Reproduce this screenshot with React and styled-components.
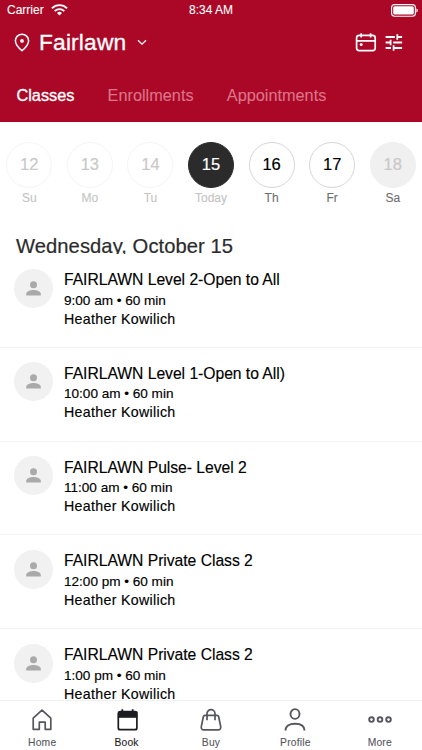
import styled, { createGlobalStyle } from "styled-components";

const DAYS = [
  { num: 12, label: "Su", state: "past" },
  { num: 13, label: "Mo", state: "past" },
  { num: 14, label: "Tu", state: "past" },
  { num: 15, label: "Today", state: "selected" },
  { num: 16, label: "Th", state: "open" },
  { num: 17, label: "Fr", state: "open" },
  { num: 18, label: "Sa", state: "closed" },
];

const CLASSES = [
  { id: 1, name: "FAIRLAWN Level 2-Open to All", time: "9:00 am • 60 min" },
  { id: 2, name: "FAIRLAWN Level 1-Open to All)", time: "10:00 am • 60 min" },
  { id: 3, name: "FAIRLAWN Pulse- Level 2", time: "11:00 am • 60 min" },
  { id: 4, name: "FAIRLAWN Private Class 2", time: "12:00 pm • 60 min" },
  { id: 5, name: "FAIRLAWN Private Class 2", time: "1:00 pm • 60 min" },
];

const CIRCLE = {
  past: { bg: "#fff", border: "#f5f5f5", color: "#c9c9c9", label: "#c4c4c4" },
  selected: { bg: "#2b2b2b", border: "#2b2b2b", color: "#fff", label: "#c4c4c4" },
  open: { bg: "#fff", border: "#d6d6d6", color: "#000", label: "#6e6e6e" },
  closed: { bg: "#f0f0f0", border: "#f0f0f0", color: "#c8c8c8", label: "#6e6e6e" },
};

const GlobalStyle = createGlobalStyle`
  * {
    box-sizing: border-box;
  }
  body {
    margin: 0;
    background: #fff;
    font-family: "Liberation Sans", Arial, sans-serif;
    overflow: hidden;
  }
  svg {
    display: block;
    flex: none;
  }
`;

const Screen = styled.div`
  display: flex;
  flex-direction: column;
  width: 422px;
  height: 750px;
  overflow: hidden;
`;

//header
const Header = styled.header`
  flex: none;
  height: 122px;
  background: #ab0726;
  color: #fff;
`;
const StatusBar = styled.div`
  display: grid;
  grid-template-columns: 1fr auto 1fr;
  align-items: center;
  height: 20px;
  padding: 0 3px 0 7px;
  font-size: 12px;
  line-height: 20px;
  -webkit-text-stroke: 0.1px;
`;
const Carrier = styled.div`
  display: flex;
  align-items: center;
  gap: 7px;
`;
const Clock = styled.div`
  padding-right: 4px;
`;
const Battery = styled.div`
  display: flex;
  justify-content: flex-end;
`;
const TitleBar = styled.div`
  display: flex;
  align-items: center;
  height: 44px;
  padding: 0 19px 0 14px;
`;
const Location = styled.h1`
  margin: 0 11px 0 9px;
  font-size: 22.8px;
  font-weight: 400;
  line-height: 44px;
  letter-spacing: 0.15px;
  -webkit-text-stroke: 0.3px;
`;
const Actions = styled.div`
  display: flex;
  align-items: center;
  gap: 8px;
  margin-left: auto;
`;
const Tabs = styled.nav`
  display: flex;
  gap: 33.2px;
  padding: 21px 16.5px 0;
`;
const Tab = styled.div`
  font-size: 16.3px;
  line-height: 20px;
  color: ${(p) => (p.$active ? "#fff" : "#dc7589")};
  -webkit-text-stroke: ${(p) => (p.$active ? "0.35px" : "0.1px")};
`;

//days
const Week = styled.div`
  display: flex;
  flex: none;
  justify-content: center;
  height: 108px;
  padding-top: 19.5px;
`;
const Day = styled.div`
  display: flex;
  flex: none;
  flex-direction: column;
  align-items: center;
  width: 60.6px;
`;
const Circle = styled.div`
  display: flex;
  justify-content: center;
  align-items: center;
  width: 46px;
  height: 46px;
  border: 1px solid ${(p) => CIRCLE[p.$state].border};
  border-radius: 50%;
  background: ${(p) => CIRCLE[p.$state].bg};
  color: ${(p) => CIRCLE[p.$state].color};
  font-size: 16.5px;
  -webkit-text-stroke: 0.2px;
`;
const DayLabel = styled.div`
  margin-top: 2px;
  font-size: 12px;
  line-height: 16px;
  color: ${(p) => CIRCLE[p.$state].label};
  -webkit-text-stroke: 0.1px;
`;
const DateTitle = styled.h2`
  flex: none;
  height: 24px;
  margin: 0;
  padding-left: 16px;
  overflow: hidden;
  font-size: 20.2px;
  font-weight: 400;
  line-height: 32px;
  letter-spacing: 0.06px;
  color: #2b2b2b;
  -webkit-text-stroke: 0.2px;
`;

//list
const List = styled.div`
  flex: 1;
  min-height: 0;
  overflow: hidden;
`;
const Item = styled.div`
  display: flex;
  height: 93.75px;
  padding: 14.5px 14px 0 13.5px;
  border-bottom: 1px solid #f3f3f3;
`;
const Avatar = styled.div`
  display: flex;
  flex: none;
  justify-content: center;
  align-items: center;
  width: 39px;
  height: 39px;
  margin-right: 11.5px;
  border-radius: 50%;
  background: #f1f1f1;
`;
const Info = styled.div`
  padding-top: 1.5px;
  color: #000;
  -webkit-text-stroke: 0.15px;
`;
const Name = styled.div`
  font-size: 15.7px;
  line-height: 20.5px;
  letter-spacing: -0.03px;
`;
const Time = styled.div`
  font-size: 13.6px;
  line-height: 19px;
  letter-spacing: -0.02px;
`;
const Teacher = styled.div`
  font-size: 14.2px;
  line-height: 19px;
  letter-spacing: 0.32px;
`;

//bottom bar
const BottomBar = styled.nav`
  display: grid;
  flex: none;
  grid-template-columns: repeat(5, 1fr);
  height: 50px;
  border-top: 1px solid #f0f0f0;
  background: #fff;
`;
const BottomItem = styled.div`
  display: flex;
  flex-direction: column;
  align-items: center;
  padding-top: 7px;
  font-size: 10.3px;
  line-height: 14px;
  letter-spacing: 0.2px;
  color: ${(p) => (p.$active ? "#1c1c22" : "#55565e")};
  -webkit-text-stroke: 0.1px;
  svg {
    margin-bottom: 4px;
  }
`;

const WifiIcon = () => (
  <svg width="17" height="12" viewBox="0 0 17 12" fill="none" stroke="#fff" strokeWidth="1.9">
    <path d="M.9 4.3a10.8 10.8 0 0 1 15.2 0" />
    <path d="M3.7 7.1a6.8 6.8 0 0 1 9.6 0" />
    <path d="M8.5 11.6 6 9.1a3.5 3.5 0 0 1 5 0z" fill="#fff" stroke="none" />
  </svg>
);

const BatteryIcon = () => (
  <svg width="28" height="13" viewBox="0 0 28 13">
    <rect x=".6" y=".6" width="23.8" height="11.6" rx="3" fill="none" stroke="#fff" strokeWidth="1.1" />
    <rect x="2.2" y="2.2" width="20.6" height="8.4" rx="1.6" fill="#fff" />
    <path d="M25.4 4.4c1.8.5 1.8 3.5 0 4z" fill="#fff" />
  </svg>
);

const PinIcon = () => (
  <svg width="16" height="19" viewBox="0 0 16 19">
    <path
      d="M8 1.2a6.6 6.6 0 0 0-6.6 6.6c0 4.4 4.6 8.3 6.6 9.9 2-1.6 6.6-5.5 6.6-9.9A6.6 6.6 0 0 0 8 1.2z"
      fill="none"
      stroke="#fff"
      strokeWidth="1.5"
    />
    <circle cx="8" cy="7.9" r="1.9" fill="#fff" />
  </svg>
);

const ChevronIcon = () => (
  <svg width="10" height="7" viewBox="0 0 10 7" fill="none" stroke="#fff" strokeWidth="1.3">
    <path d="M1 1.2l4 4 4-4" />
  </svg>
);

const CalendarIcon = () => (
  <svg width="22" height="20" viewBox="0 0 22 20" fill="none" stroke="#fff" strokeWidth="1.7">
    <rect x="1.6" y="3.3" width="18.6" height="15.4" rx="2.6" />
    <path d="M1.6 8.8h18.600M6.200 1.200v4.200M15.600 1.200v4.200" />
    <circle cx="6.200" cy="12.600" r="1.500" fill="#fff" stroke="none" />
  </svg>
);

const FilterIcon = () => (
  <svg width="18" height="18" viewBox="0 0 18 18" fill="none" stroke="#fff" strokeWidth="1.8">
    <path d="M.6 4h9.300M12.300 4h4.800M12.300 1.200v5.600" />
    <path d="M.6 9.500h4.200M5.600 6.700v5.600M8.200 9.500h8.900" />
    <path d="M.6 15h5.400M8.600 15h8.500M8.600 12.300v5.500" />
  </svg>
);

const PersonIcon = () => (
  <svg width="15" height="15" viewBox="0 0 15 15" fill="#aaa">
    <circle cx="7.5" cy="3.8" r="3.5" />
    <path d="M.2 14.5v-1.700c0-2.500 4.300-3.800 7.300-3.800s7.300 1.300 7.300 3.800v1.700z" />
  </svg>
);

const HomeIcon = () => (
  <svg width="24" height="24" viewBox="0 0 24 24" fill="none" stroke="#55565e" strokeWidth="1.7">
    <path d="M3.200 21.300V10.200L12 2.200l8.800 8v11.100h-5.600v-7.100H9.300v7.100z" strokeLinejoin="round" />
  </svg>
);

const BookIcon = () => (
  <svg width="24" height="24" viewBox="0 0 24 24">
    <rect x="3.3" y="3.7" width="18.6" height="18" rx="2" fill="none" stroke="#1c1c22" strokeWidth="1.7" />
    <path d="M2.900 3.500h19.400v6.300H2.900z" fill="#1c1c22" />
    <path d="M7.300 1.300v3M17.700 1.300v3" stroke="#1c1c22" strokeWidth="1.8" />
  </svg>
);

const BuyIcon = () => (
  <svg width="24" height="24" viewBox="0 0 24 24" fill="none" stroke="#55565e" strokeWidth="1.7">
    <path
      d="M5.900 7.300h12.200c.8 0 1.300.5 1.500 1.200l2.100 10.200c.3 1.800-.7 3.100-2.400 3.100H4.700c-1.700 0-2.700-1.300-2.400-3.100L4.400 8.500c.2-.7.7-1.200 1.500-1.200z"
      strokeLinejoin="round"
    />
    <path d="M8 12.300V5.700a4 4 0 0 1 8 0v6.600" />
  </svg>
);

const ProfileIcon = () => (
  <svg width="24" height="24" viewBox="0 0 24 24" fill="none" stroke="#55565e" strokeWidth="1.9">
    <ellipse cx="12" cy="6" rx="4.5" ry="4.9" />
    <path d="M2.500 22.600c0-4.400 3.500-6.900 9.500-6.900s9.500 2.500 9.500 6.900" />
  </svg>
);

const MoreIcon = () => (
  <svg width="24" height="24" viewBox="0 0 24 24" fill="none" stroke="#55565e" strokeWidth="1.9">
    <circle cx="3.5" cy="11.6" r="2.3" />
    <circle cx="12" cy="11.6" r="2.3" />
    <circle cx="20.5" cy="11.6" r="2.3" />
  </svg>
);

const MENU = [
  { label: "Home", Icon: HomeIcon },
  { label: "Book", Icon: BookIcon, active: true },
  { label: "Buy", Icon: BuyIcon },
  { label: "Profile", Icon: ProfileIcon },
  { label: "More", Icon: MoreIcon },
];

export default () => {
  return (
    <Screen>
      <GlobalStyle />
      <Header>
        <StatusBar>
          <Carrier>
            Carrier
            <WifiIcon />
          </Carrier>
          <Clock>8:34 AM</Clock>
          <Battery>
            <BatteryIcon />
          </Battery>
        </StatusBar>
        <TitleBar>
          <PinIcon />
          <Location>Fairlawn</Location>
          <ChevronIcon />
          <Actions>
            <CalendarIcon />
            <FilterIcon />
          </Actions>
        </TitleBar>
        <Tabs>
          <Tab $active>Classes</Tab>
          <Tab>Enrollments</Tab>
          <Tab>Appointments</Tab>
        </Tabs>
      </Header>
      <Week>
        {DAYS.map((day) => (
          <Day key={day.num}>
            <Circle $state={day.state}>{day.num}</Circle>
            <DayLabel $state={day.state}>{day.label}</DayLabel>
          </Day>
        ))}
      </Week>
      <DateTitle>Wednesday, October 15</DateTitle>
      <List>
        {CLASSES.map((el) => (
          <Item key={el.id}>
            <Avatar>
              <PersonIcon />
            </Avatar>
            <Info>
              <Name>{el.name}</Name>
              <Time>{el.time}</Time>
              <Teacher>Heather Kowilich</Teacher>
            </Info>
          </Item>
        ))}
      </List>
      <BottomBar>
        {MENU.map(({ label, Icon, active }) => (
          <BottomItem key={label} $active={active}>
            <Icon />
            {label}
          </BottomItem>
        ))}
      </BottomBar>
    </Screen>
  );
};
